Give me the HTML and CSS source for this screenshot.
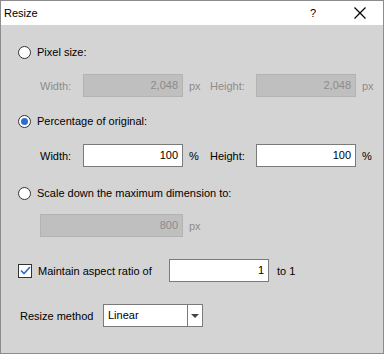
FILE: index.html
```html
<!DOCTYPE html>
<html lang="en">
<head>
    <meta charset="UTF-8">
    <title>Resize</title>
    <link rel="stylesheet" href="styles.css">
</head>
<body>
    <div class="window">
        <div class="titlebar">
            <span class="title">Resize</span>
            <span class="help">?</span>
            <span class="close">
                <svg width="12" height="12" viewBox="0 0 12 12"><path d="M0.5 0.5 L11.5 11.5 M11.5 0.5 L0.5 11.5" stroke="#000" stroke-width="1.2" fill="none"/></svg>
            </span>
        </div>
        <div class="content">
            <div class="option opt-pixel">
                <span class="radio"></span>
                <span>Pixel size:</span>
            </div>
            <div class="fields disabled f-pixel">
                <span class="lbl">Width:</span>
                <span class="input">2,048</span>
                <span class="unit">px</span>
                <span class="lbl lbl-h">Height:</span>
                <span class="input">2,048</span>
                <span class="unit">px</span>
            </div>

            <div class="option opt-percent">
                <span class="radio checked"></span>
                <span>Percentage of original:</span>
            </div>
            <div class="fields f-percent">
                <span class="lbl">Width:</span>
                <span class="input">100</span>
                <span class="unit">%</span>
                <span class="lbl lbl-h">Height:</span>
                <span class="input">100</span>
                <span class="unit">%</span>
            </div>

            <div class="option opt-scale">
                <span class="radio"></span>
                <span>Scale down the maximum dimension to:</span>
            </div>
            <div class="fields disabled f-scale">
                <span class="input wide">800</span>
                <span class="unit">px</span>
            </div>

            <div class="option opt-aspect">
                <span class="check">
                    <svg width="11" height="11" viewBox="0 0 11 11"><path d="M1 5.5 L4 8.5 L10 2" stroke="#2a6fd0" stroke-width="1.6" fill="none"/></svg>
                </span>
                <span class="aspect-lbl">Maintain aspect ratio of</span>
                <span class="input">1</span>
                <span class="unit">to 1</span>
            </div>

            <div class="method">
                <span class="method-lbl">Resize method</span>
                <span class="combo">
                    <span class="combo-text">Linear</span>
                    <span class="combo-btn"><span class="arrow"></span></span>
                </span>
            </div>
        </div>
    </div>
</body>
</html>
```

FILE: styles.css
```css
body {
    margin: 0;
    font-family: "Liberation Sans", Tahoma, sans-serif;
    font-size: 11px;
    color: #000;
}

.window {
    width: 384px;
    height: 354px;
    box-sizing: border-box;
    border: 1px solid #8c8c8c;
    background: #d4d4d4;
}

.titlebar {
    height: 24px;
    background: #fff;
    display: flex;
    align-items: center;
    padding-left: 3px;
}

.title {
    flex: 1;
}

.help {
    width: 12px;
    margin-right: 32px;
}

.close {
    display: flex;
    margin-right: 17px;
}

.content {
    padding-left: 17px;
}

.option {
    display: flex;
    align-items: center;
    height: 24px;
}

.opt-pixel { margin-top: 15px; }
.opt-percent { margin-top: 12px; }
.opt-scale { margin-top: 14px; }
.opt-aspect { margin-top: 22px; height: 23px; }

.radio {
    width: 11px;
    height: 11px;
    border: 1px solid #333;
    border-radius: 50%;
    background: #fff;
    margin-right: 6px;
    display: flex;
    align-items: center;
    justify-content: center;
}

.radio.checked::after {
    content: "";
    width: 7px;
    height: 7px;
    border-radius: 50%;
    background: #2a6fd0;
}

.check {
    width: 12px;
    height: 12px;
    border: 1px solid #333;
    background: #fff;
    margin-right: 6px;
    display: flex;
    align-items: center;
    justify-content: center;
}

.fields {
    display: flex;
    align-items: center;
    height: 23px;
    padding-left: 22px;
}

.f-pixel { margin-top: 10px; }
.f-percent { margin-top: 11px; }
.f-scale { margin-top: 9px; }

.lbl {
    width: 43px;
}

.lbl-h {
    width: 46px;
}

.input {
    width: 100px;
    height: 23px;
    box-sizing: border-box;
    border: 1px solid #7a7a7a;
    background: #fff;
    text-align: right;
    padding-right: 4px;
    line-height: 21px;
}

.input.wide {
    width: 143px;
}

.unit {
    width: 27px;
    padding-left: 6px;
    box-sizing: border-box;
}

.disabled {
    color: #8c8c8c;
}

.disabled .input {
    background: #bfbfbf;
    border-color: #b3b3b3;
}

.aspect-lbl {
    width: 131px;
}

.opt-aspect .unit {
    padding-left: 8px;
    width: auto;
}

.method {
    display: flex;
    align-items: center;
    margin-top: 22px;
    padding-left: 2px;
}

.method-lbl {
    width: 83px;
}

.combo {
    display: flex;
    width: 100px;
    height: 23px;
    box-sizing: border-box;
    border: 1px solid #7a7a7a;
    background: #fff;
}

.combo-text {
    flex: 1;
    padding-left: 4px;
    line-height: 21px;
}

.combo-btn {
    width: 14px;
    border-left: 1px solid #7a7a7a;
    display: flex;
    align-items: center;
    justify-content: center;
}

.arrow {
    width: 0;
    height: 0;
    border-left: 4px solid transparent;
    border-right: 4px solid transparent;
    border-top: 4px solid #444;
}
```
